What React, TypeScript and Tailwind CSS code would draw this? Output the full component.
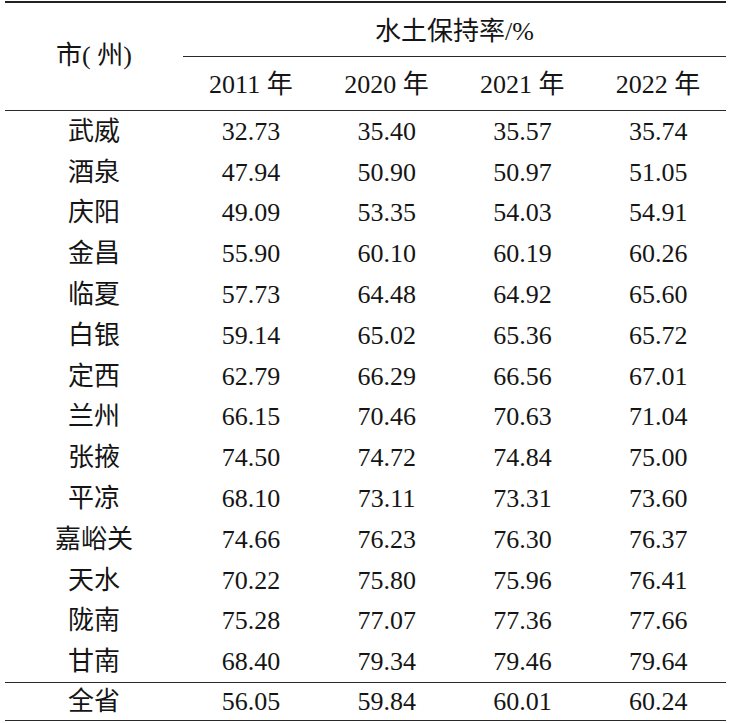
const rows: [string, string, string, string, string][] = [
  ['武威', '32.73', '35.40', '35.57', '35.74'],
  ['酒泉', '47.94', '50.90', '50.97', '51.05'],
  ['庆阳', '49.09', '53.35', '54.03', '54.91'],
  ['金昌', '55.90', '60.10', '60.19', '60.26'],
  ['临夏', '57.73', '64.48', '64.92', '65.60'],
  ['白银', '59.14', '65.02', '65.36', '65.72'],
  ['定西', '62.79', '66.29', '66.56', '67.01'],
  ['兰州', '66.15', '70.46', '70.63', '71.04'],
  ['张掖', '74.50', '74.72', '74.84', '75.00'],
  ['平凉', '68.10', '73.11', '73.31', '73.60'],
  ['嘉峪关', '74.66', '76.23', '76.30', '76.37'],
  ['天水', '70.22', '75.80', '75.96', '76.41'],
  ['陇南', '75.28', '77.07', '77.36', '77.66'],
  ['甘南', '68.40', '79.34', '79.46', '79.64'],
];

const total: [string, string, string, string, string] = ['全省', '56.05', '59.84', '60.01', '60.24'];

function Cell({ children }: { children: React.ReactNode }) {
  return <div className="flex items-center justify-center whitespace-pre">{children}</div>;
}

function Row({ cells, className }: { cells: string[]; className: string }) {
  return (
    <div className={`grid grid-cols-[178px_repeat(4,1fr)] ${className}`}>
      {cells.map((c, i) => (
        <Cell key={i}>{c}</Cell>
      ))}
    </div>
  );
}

export default function App() {
  return (
    <div className="w-[732px] h-[723px] bg-white text-[#151515] font-['Liberation_Serif','Noto_Sans_CJK_SC',serif] text-[26px] leading-none pt-[1px]">
      <div className="ml-[5px] w-[721px] border-t-2 border-[#222]">
        {/* Header */}
        <div className="grid grid-cols-[178px_1fr] border-b border-[#2a2a2a]">
          <div className="flex items-center justify-center pb-[2px] whitespace-pre">市( 州)</div>
          <div className="flex flex-col">
            <div className="h-[54px] flex items-center justify-center pt-[4px] border-b border-[#2a2a2a]">
              水土保持率/%
            </div>
            <div className="h-[53px] grid grid-cols-4 pt-[3px]">
              {['2011 年', '2020 年', '2021 年', '2022 年'].map((y) => (
                <Cell key={y}>{y}</Cell>
              ))}
            </div>
          </div>
        </div>

        {/* Body */}
        <div className="border-b border-[#2a2a2a]">
          {rows.map((r) => (
            <Row key={r[0]} cells={r} className="h-[40.8px] pt-[1px]" />
          ))}
        </div>

        {/* Total */}
        <Row cells={total} className="h-[38px] border-b border-[#2a2a2a]" />
      </div>
    </div>
  );
}
